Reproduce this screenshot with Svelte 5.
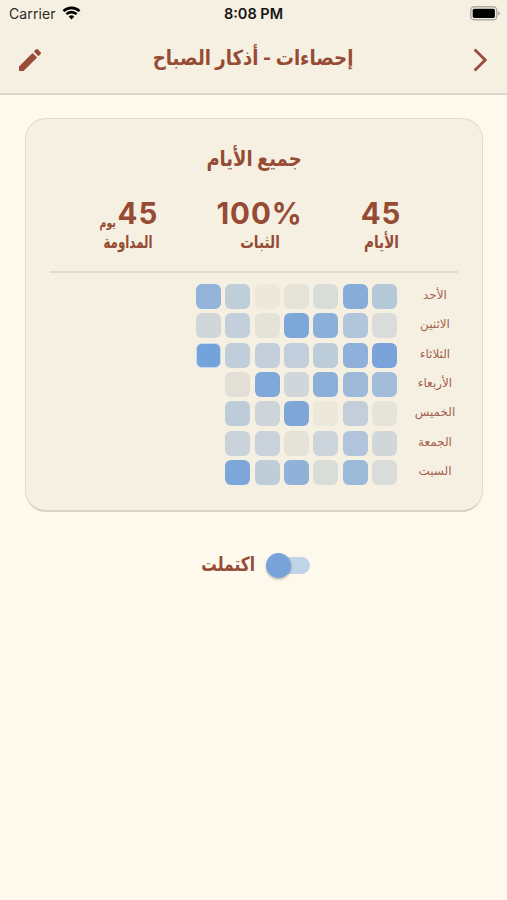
<script lang="ts">
  type Stat = { value: string; unit?: string; label: string };
  type Day = { name: string; cells: string[] };

  const stats: Stat[] = [
    { value: '45', label: 'الأيام' },
    { value: '100%', label: 'الثبات' },
    { value: '45', unit: 'يوم', label: 'المداومة' },
  ];

  // newest week last, each cell is the completion shade of that day
  const days: Day[] = [
    { name: 'الأحد', cells: ['#b3c8d9', '#87acda', '#d8ddd9', '#e6e3d8', '#ece8da', '#bfcfda', '#94b3da'] },
    { name: 'الاثنين', cells: ['#d9dcda', '#b2c6db', '#8cafda', '#7ea7d9', '#e5e2d7', '#c3cfda', '#d1d6d8'] },
    { name: 'الثلاثاء', cells: ['#79a3da', '#8eb0da', '#bdccd9', '#c2cedb', '#c5cfdb', '#c0ceda', '#74a3db'] },
    { name: 'الأربعاء', cells: ['#a1bddb', '#9dbada', '#8bafd9', '#d0d6d9', '#80a9da', '#e1dfd6'] },
    { name: 'الخميس', cells: ['#e6e4d8', '#c4ceda', '#ece9db', '#7ea7d8', '#cdd4da', '#bccdd9'] },
    { name: 'الجمعة', cells: ['#d1d6d9', '#b1c4dc', '#ccd4dc', '#e5e2d7', '#c9d2db', '#cbd3da'] },
    { name: 'السبت', cells: ['#d9dcd8', '#9abada', '#d9dcd7', '#90b2d9', '#bfcdd9', '#7da6db'] },
  ];

  let completed = $state(false);
</script>

<div class="screen">
  <header>
    <div class="status-bar">
      <div class="carrier">
        <span>Carrier</span>
        <svg class="wifi" viewBox="0 0 18 14">
          <path d="M9 13.4 6.2 10.6a4 4 0 0 1 5.6 0z" />
          <path class="arc" d="M3.9 8.2a7.2 7.2 0 0 1 10.2 0M1 5.2a11.3 11.3 0 0 1 16 0" />
        </svg>
      </div>
      <div class="time">8:08 PM</div>
      <svg class="battery" viewBox="0 0 30 15">
        <rect class="shell" x="0.8" y="0.8" width="26" height="13" rx="3.6" />
        <rect x="2.7" y="2.7" width="22.2" height="9.2" rx="1.6" />
        <path class="tip" d="M28 5.2q2 .8 2 2.1t-2 2.1z" />
      </svg>
    </div>
    <div class="nav-bar">
      <button type="button" aria-label="تعديل">
        <svg class="pencil" viewBox="3 3 18 18">
          <path d="M3 17.25V21h3.75L17.81 9.94l-3.75-3.75zM20.71 7.04a1 1 0 0 0 0-1.41l-2.34-2.34a1 1 0 0 0-1.41 0l-1.83 1.83 3.75 3.75z" />
        </svg>
      </button>
      <h1>إحصاءات - أذكار الصباح</h1>
      <button type="button" aria-label="رجوع">
        <svg class="chevron" viewBox="0 0 14 24">
          <path d="M1.6 1.6 12.2 12 1.6 22.4" />
        </svg>
      </button>
    </div>
  </header>

  <main>
    <section class="card">
      <h2>جميع الأيام</h2>

      <div class="stats">
        {#each stats as stat}
          <div class="stat">
            <div class="value">
              <span class="number">{stat.value}</span>
              {#if stat.unit}<span class="unit">{stat.unit}</span>{/if}
            </div>
            <div class="label">{stat.label}</div>
          </div>
        {/each}
      </div>

      <div class="calendar">
        {#each days as day, row}
          <div class="day">
            <span class="day-name">{day.name}</span>
            {#each day.cells as shade, week}
              <span class="cell" class:today={row === 2 && week === 6} style:background-color={shade}></span>
            {/each}
          </div>
        {/each}
      </div>
    </section>

    <div class="toggle-row">
      <button
        type="button"
        class="switch"
        role="switch"
        aria-label="اكتملت"
        aria-checked={completed}
        onclick={() => (completed = !completed)}
      >
        <span class="thumb"></span>
      </button>
      <span class="toggle-label">اكتملت</span>
    </div>
  </main>
</div>

<style>
  :global(body) {
    margin: 0;
    background: #fef9ed;
  }

  .screen {
    box-sizing: border-box;
    width: 100%;
    height: 900px;
    overflow: hidden;
    background: #fef9ed;
    color: #964b34;
    font-family: 'Inter', 'DejaVu Sans', sans-serif;
  }

  header {
    box-sizing: border-box;
    height: 95px;
    background: #f6f0e3;
    border-bottom: 2px solid #ddd5ca;
  }

  .status-bar {
    display: grid;
    grid-template-columns: 1fr auto 1fr;
    align-items: center;
    height: 27px;
    padding: 0 7px 0 9px;
    font-size: 14px;
    color: #2b2924;
  }

  .carrier {
    display: flex;
    align-items: center;
    gap: 6px;
    letter-spacing: 0.1px;
  }

  .wifi {
    width: 19px;
    height: 14px;
    margin-top: -2px;
    fill: #000;
  }

  .arc {
    fill: none;
    stroke: #000;
    stroke-width: 2.6;
  }

  .time {
    font-weight: 600;
    font-size: 14.5px;
    margin-left: -2px;
    color: #15130f;
  }

  .battery {
    justify-self: end;
    width: 30px;
    height: 15px;
  }

  .shell {
    fill: none;
    stroke: #aeaaa0;
    stroke-width: 1.4;
  }

  .tip {
    fill: #aeaaa0;
  }

  .nav-bar {
    display: flex;
    align-items: center;
    justify-content: space-between;
    height: 65px;
    padding: 0 19px;
  }

  button {
    display: flex;
    padding: 0;
    border: 0;
    background: none;
    cursor: pointer;
  }

  .nav-bar button {
    width: 22px;
  }

  .nav-bar button:last-child {
    box-sizing: border-box;
    justify-content: flex-end;
    padding-right: 1px;
  }

  .pencil {
    width: 22px;
    height: 22px;
    fill: #9a4d36;
  }

  .chevron {
    width: 14px;
    height: 24px;
    fill: none;
    stroke: #9a4d36;
    stroke-width: 2.8;
  }

  h1,
  h2 {
    margin: 0;
    font-weight: 700;
    white-space: nowrap;
    direction: rtl;
  }

  /* the Arabic headings are set slightly condensed and tall */
  h1 {
    margin-top: -4px;
    font-size: 19px;
    transform: scale(0.955, 1.1);
  }

  main {
    padding: 23px 24.5px 0;
  }

  .card {
    box-sizing: border-box;
    height: 394px;
    padding: 0 24px;
    direction: rtl;
    background: #f6f0e3;
    border: 1.5px solid #e0d9ce;
    border-bottom: 2.5px solid #d9d1c6;
    border-radius: 21px;
  }

  h2 {
    padding-top: 23px;
    line-height: 32px;
    font-size: 20px;
    text-align: center;
    transform: scale(0.9, 1.08);
  }

  .stats {
    display: grid;
    grid-template-columns: 153px 90px 1fr;
    box-sizing: border-box;
    height: 99px;
    padding-top: 21px;
    border-bottom: 2px solid #e3dacd;
  }

  .stat {
    text-align: center;
    white-space: nowrap;
  }

  .stat:last-child {
    padding-right: 9px;
  }

  .value {
    display: flex;
    align-items: baseline;
    justify-content: center;
    gap: 3px;
    height: 35px;
    line-height: 36px;
  }

  .number {
    font-size: 29.5px;
    font-weight: 650;
    letter-spacing: 0.9px;
  }

  .unit {
    margin: 0 -1px 0 -2px;
    font-size: 12px;
    font-weight: 700;
    transform: translateY(3px) scale(0.78, 1.1);
    transform-origin: right;
  }

  .label {
    line-height: 24px;
    font-size: 16px;
    font-weight: 700;
    transform: scale(0.85, 1.08);
  }

  .stat:last-child .label {
    transform: scale(0.74, 1.08);
  }

  .calendar {
    display: flex;
    flex-direction: column;
    gap: 4.35px;
    padding-top: 11px;
  }

  .day {
    display: flex;
    gap: 4.35px;
    height: 25px;
  }

  .day-name {
    box-sizing: border-box;
    width: 56px;
    padding-left: 11px;
    line-height: 22px;
    font-size: 12px;
    display: flex;
    justify-content: center;
    white-space: nowrap;
    color: #a5614e;
  }

  .cell {
    box-sizing: border-box;
    width: 25px;
    height: 25px;
    border-radius: 6px;
  }

  .today {
    border: 1.5px solid #c5dcf0;
  }

  .toggle-row {
    display: flex;
    align-items: center;
    justify-content: center;
    gap: 7px;
    height: 30px;
    margin-top: 38px;
    direction: rtl;
  }

  .switch {
    align-items: center;
    width: 44px;
    height: 17px;
    direction: ltr;
    border-radius: 9px;
    background: linear-gradient(to right, transparent 8px, #bfd4e6 8px);
  }

  .thumb {
    width: 25px;
    height: 25px;
    flex: none;
    border-radius: 50%;
    background: #78a3d8;
    box-shadow: 0 1.5px 2.5px rgba(60, 60, 60, 0.35);
  }

  .toggle-label {
    margin-top: -3px;
    font-size: 18px;
    font-weight: 700;
    transform: scale(0.86, 1.1);
  }
</style>
